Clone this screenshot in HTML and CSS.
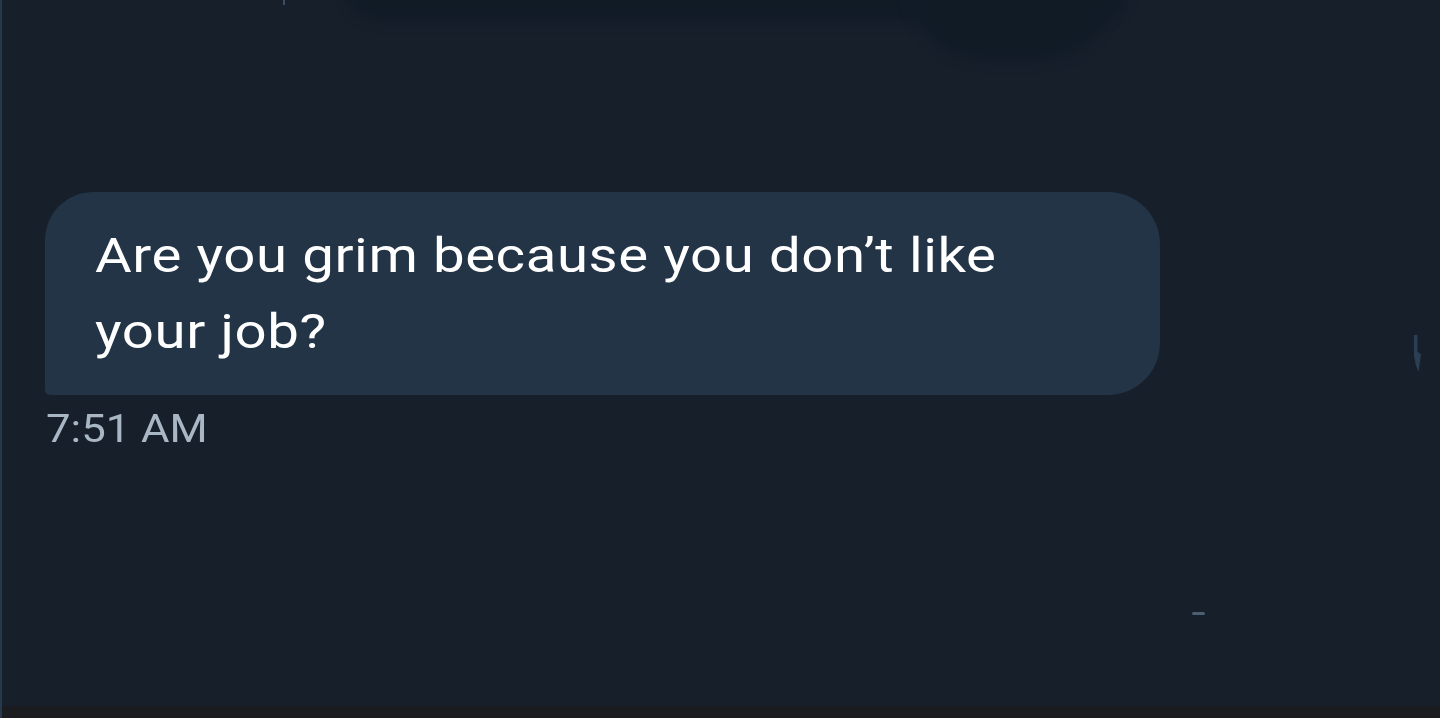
FILE: index.html
```html
<!DOCTYPE html>
<html lang="en">
<head>
<meta charset="utf-8">
<link rel="stylesheet" href="styles.css">
<title>Message</title>
</head>
<body>
<div class="screen">
  <div class="shade shade-top"></div>
  <div class="shade shade-blob"></div>
  <div class="tick"></div>
  <main class="thread">
    <div class="message">
      <div class="bubble">
        <p class="text">Are you grim because you don’t like your job?</p>
      </div>
      <div class="time">7:51 AM</div>
    </div>
  </main>
  <svg class="arrow" width="14" height="40" viewBox="0 0 14 40" aria-hidden="true">
    <path d="M4 1 H7.5 V18 L11 20 L8.5 38 L5.5 30 L4 22 Z" fill="#2a3e54"/>
  </svg>
  <div class="dash"></div>
  <div class="bottom-bar"></div>
</div>
</body>
</html>
```

FILE: styles.css
```css
html, body {
  margin: 0;
  padding: 0;
  background: #161f2a;
}

.screen {
  position: relative;
  width: 1440px;
  height: 718px;
  overflow: hidden;
  background: #161f2a;
  border-left: 2px solid #26384c;
  box-sizing: border-box;
  display: flex;
  flex-direction: column;
  font-family: Roboto, "Noto Sans", sans-serif;
}

.thread {
  flex: 1;
  padding: 192px 0 0 43px;
}

.message {
  display: flex;
  flex-direction: column;
  align-items: flex-start;
}

.bubble {
  width: 1115px;
  height: 203px;
  box-sizing: border-box;
  background: #223446;
  border-radius: 48px 52px 52px 5px;
  padding: 26px 40px 0 50px;
}

.text {
  margin: 0;
  color: #ffffff;
  font-size: 49px;
  line-height: 76px;
  letter-spacing: 0.5px;
  width: 840px;
  transform: scaleX(1.15);
  transform-origin: left top;
}

.time {
  margin-top: 10px;
  margin-left: 1px;
  color: #a9b7c5;
  font-size: 38px;
  line-height: 48px;
  transform: scaleX(1.15);
  transform-origin: left top;
}

.bottom-bar {
  height: 12px;
  background: #1a1c20;
  flex: none;
}

.shade {
  position: absolute;
  background: #111b26;
  filter: blur(6px);
}

.shade-top {
  left: 345px;
  top: -20px;
  width: 780px;
  height: 40px;
  border-radius: 0 0 30px 30px;
}

.shade-blob {
  left: 905px;
  top: -20px;
  width: 210px;
  height: 80px;
  border-radius: 0 0 90px 90px;
}

.tick {
  position: absolute;
  left: 281px;
  top: 0;
  width: 2px;
  height: 5px;
  background: #3a4d62;
}

.arrow {
  position: absolute;
  left: 1408px;
  top: 334px;
}

.dash {
  position: absolute;
  left: 1190px;
  top: 612px;
  width: 13px;
  height: 3px;
  border-radius: 2px;
  background: #4b5e72;
}
```
